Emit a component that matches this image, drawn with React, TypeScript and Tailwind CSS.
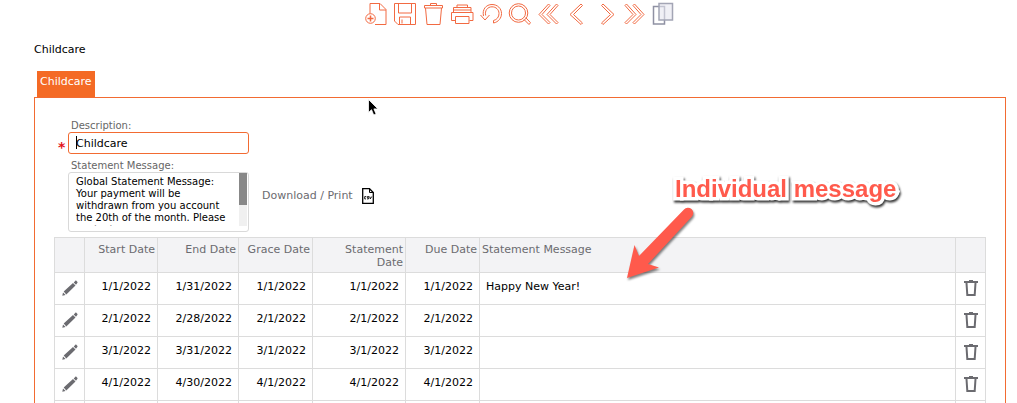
import type { ReactNode } from "react";

type BillingPeriod = {
  start: string;
  end: string;
  grace: string;
  statement: string;
  due: string;
  message?: string;
};

const periods: BillingPeriod[] = [
  {
    start: "1/1/2022",
    end: "1/31/2022",
    grace: "1/1/2022",
    statement: "1/1/2022",
    due: "1/1/2022",
    message: "Happy New Year!",
  },
  {
    start: "2/1/2022",
    end: "2/28/2022",
    grace: "2/1/2022",
    statement: "2/1/2022",
    due: "2/1/2022",
  },
  {
    start: "3/1/2022",
    end: "3/31/2022",
    grace: "3/1/2022",
    statement: "3/1/2022",
    due: "3/1/2022",
  },
  {
    start: "4/1/2022",
    end: "4/30/2022",
    grace: "4/1/2022",
    statement: "4/1/2022",
    due: "4/1/2022",
  },
];

const message =
  "Global Statement Message:\nYour payment will be\nwithdrawn from you account\nthe 20th of the month. Please\ncontact us";

// Toolbar glyphs, all drawn on a 24x24 grid
const tools: { name: string; icon: ReactNode }[] = [
  {
    name: "New",
    icon: (
      <>
        <path d="M6 11.500V1.500h10l6 6V22.500H11" />
        <path d="M15.500 2v6H22" />
        <circle cx="6.500" cy="16.500" r="4.800" />
        <path d="M6.500 13.500v6M3.500 16.500h6" strokeWidth="1.500" />
      </>
    ),
  },
  {
    name: "Save",
    icon: (
      <>
        <path d="M1.500 1.500h21v21H5l-3.500-3.500z" />
        <path d="M5.500 1.500v9.500h13V1.500M6.500 22.500V15h11v7.500M9 17.500v4" />
      </>
    ),
  },
  {
    name: "Delete",
    icon: (
      <>
        <path d="M4.500 6l1.500 16.500h13L20.500 6" />
        <path d="M3.500 3.500h18V6h-18zM9.500 3.500v-2h6v2" />
      </>
    ),
  },
  {
    name: "Print",
    icon: (
      <>
        <path d="M7 5V3h10.500v2M3.500 10.500V5.500h17.500v5" />
        <path d="M5 18.500H1.500V10.500H23v8h-3.500" />
        <path d="M5.500 14.500h13.500v7H5.500zM3.500 8h17.500" />
      </>
    ),
  },
  {
    name: "Undo",
    icon: (
      <>
        <path d="M4.500 14C3 7.500 7 2.500 13 2.500c5.500 0 9.500 4 9.500 9 0 4.500-3 8.500-8 9.500v-2.500c3.500-.8 5.500-3.500 5.500-7 0-3.800-3-6.700-7-6.700-4.500 0-7.500 4-6.300 8.700" />
        <path d="M1.500 13l4.500 5 4.500-5" />
      </>
    ),
  },
  {
    name: "Search",
    icon: (
      <>
        <circle cx="11.500" cy="11" r="9.300" />
        <circle cx="11.500" cy="11" r="7" />
        <path d="M17 17.500l5 5 1.500-1.800-4.700-5" />
      </>
    ),
  },
  {
    name: "First",
    icon: (
      <path d="M12.500 2L3 12.500l9.500 9.500 1.500-1.500-8-8 8-9zM20.500 2L11 12.500l9.500 9.500 1.500-1.500-8-8 8-9z" />
    ),
  },
  {
    name: "Previous",
    icon: <path d="M16 2L5 12.500 16 22.500l1.500-1.500-9-8.500 9-9z" />,
  },
  {
    name: "Next",
    icon: <path d="M9 2l11 10.500L9 22.500 7.500 21l9-8.500-9-9z" />,
  },
  {
    name: "Last",
    icon: (
      <path d="M12.500 2l9.500 10.500-9.500 9.500-1.500-1.500 8-8-8-9zM4.500 2L14 12.500 4.500 22 3 20.500l8-8-8-9z" />
    ),
  },
  {
    name: "Copy",
    icon: (
      <g stroke="#a3a5b5" strokeWidth="1.500">
        <path d="M2.500 4.500h11v17.500h-11z" stroke="#8f91a3" />
        <path d="M8 1.500h13.500v16.500H8z" fill="#e6e6f0" fillOpacity=".6" />
      </g>
    ),
  },
];

function Toolbar() {
  return (
    <div className="flex justify-center pt-[2px] pl-[22px]">
      <div className="flex w-[311px] justify-between">
        {tools.map((tool) => (
          <button key={tool.name} type="button" aria-label={tool.name}>
            <svg
              viewBox="0 0 24 24"
              className="size-6"
              fill="none"
              stroke="#f26a42"
              strokeWidth="1"
            >
              {tool.icon}
            </svg>
          </button>
        ))}
      </div>
    </div>
  );
}

function PencilIcon() {
  return (
    <svg viewBox="0 0 16 16" className="size-4" fill="#6b6b70">
      <path d="M.300 15.800l.7-3.300 2.600 2.600zM1.700 11.600L11 3l2.500 2.500-9.200 9zM11.700 2.400l1.500-1.500c.4-.4.9-.4 1.300 0l.8.8c.4.4.4.9 0 1.300l-1.300 1.700z" />
    </svg>
  );
}

function TrashIcon() {
  return (
    <svg viewBox="0 0 14 16" className="h-4 w-[14px]" fill="none" stroke="#6b6b70" strokeWidth="2">
      <path d="M0 2h14M5 1h4" />
      <path d="M2.500 3l.8 12h7.400l.8-12" />
    </svg>
  );
}

function CsvIcon() {
  return (
    <svg viewBox="0 0 12 16" className="h-4 w-3" fill="none" stroke="#000">
      <path d="M1.500.700h6l3.800 3.800v10.800H.700V.700z" strokeWidth="1.300" />
      <path d="M7.500.700v3.800h3.800" />
      <path
        d="M4.300 8.600H2.700v2.300h1.300M6.900 8.500H5.500l-.2 1.200h1.400l-.2 1.200H5M7.700 8.500l.6 2.400 1.500-2.400"
        strokeWidth=".9"
      />
    </svg>
  );
}

function DetailsForm() {
  return (
    <div className="flex items-end">
      <div className="flex w-[195px] flex-col">
        <label
          htmlFor="description"
          className="pl-[17px] text-[10px] leading-3 text-[#666]"
        >
          Description:
        </label>
        <div className="flex items-center">
          <span className="w-[14px] pt-2 pl-1 text-sm leading-3 font-bold text-[#e3131b]">
            *
          </span>
          <div className="relative flex-1">
            <input
              id="description"
              type="text"
              defaultValue="Childcare"
              className="block h-[22px] w-full rounded-[3px] border border-[#f26b32] px-[7px] text-[11px] outline-none"
            />
            <span className="absolute top-1 left-2 h-[13px] w-px bg-black" />
          </div>
        </div>
        <label
          htmlFor="message"
          className="pt-[6px] pl-[17px] text-[10px] leading-3 text-[#666]"
        >
          Statement Message:
        </label>
        <div className="relative ml-[14px] rounded-[3px] border border-[#d9d9d9] pt-[3px] pb-[5px]">
          <textarea
            id="message"
            defaultValue={message}
            className="block h-[50px] w-full resize-none overflow-hidden pr-3 pl-[7px] text-[10px] leading-3 outline-none"
          />
          <div className="absolute top-0 right-[1px] h-[53px] w-2 bg-[#f0f0f0]">
            <div className="h-8 bg-[#888]" />
          </div>
        </div>
      </div>
      <a
        href="#csv"
        className="mb-7 ml-[13px] flex items-center gap-[9px] text-[11px] leading-4 text-[#6b6b70]"
      >
        Download / Print
        <CsvIcon />
      </a>
    </div>
  );
}

function PeriodTable() {
  const head = "border border-[#dcdcdc] px-[2px] pt-[5px] text-right align-top font-normal";
  const cell = "border border-[#dcdcdc] px-[6px] pb-[5px] text-right";
  return (
    <table className="mt-[5px] w-full table-fixed border-collapse text-[11px] leading-[13px]">
      <colgroup>
        <col className="w-[30px]" />
        <col className="w-[73px]" />
        <col className="w-[81px]" />
        <col className="w-[74px]" />
        <col className="w-[93px]" />
        <col className="w-[74px]" />
        <col />
        <col className="w-[30px]" />
      </colgroup>
      <thead className="bg-[#f3f3f5] text-[#6b6b70]">
        <tr className="h-[35px]">
          <th className={head} />
          <th className={head}>Start Date</th>
          <th className={head}>End Date</th>
          <th className={head}>Grace Date</th>
          <th className={head}>
            Statement
            <br />
            Date
          </th>
          <th className={head}>Due Date</th>
          <th className="border border-[#dcdcdc] px-[2px] pt-[5px] text-left align-top font-normal">
            Statement Message
          </th>
          <th className={head} />
        </tr>
      </thead>
      <tbody>
        {periods.map((p) => (
          <tr key={p.start} className="h-8">
            <td className="border border-[#dcdcdc] p-0 pb-[2px]">
              <button type="button" aria-label="Edit" className="mx-auto block">
                <PencilIcon />
              </button>
            </td>
            <td className={cell}>{p.start}</td>
            <td className={cell}>{p.end}</td>
            <td className={cell}>{p.grace}</td>
            <td className={cell}>{p.statement}</td>
            <td className={cell}>{p.due}</td>
            <td className="border border-[#dcdcdc] px-[6px] pb-[5px] text-left">
              {p.message}
            </td>
            <td className="border border-[#dcdcdc] p-0 pb-[2px]">
              <button type="button" aria-label="Delete" className="mx-auto block">
                <TrashIcon />
              </button>
            </td>
          </tr>
        ))}
        <tr className="h-8">
          {Array.from({ length: 8 }, (_, i) => (
            <td key={i} className={cell} />
          ))}
        </tr>
      </tbody>
    </table>
  );
}

// Callout text and arrow pointing at the message column
function Callout() {
  return (
    <div className="pointer-events-none absolute top-[174px] left-[620px]">
      <div className="pl-[55px] font-['Liberation_Sans',Arial,sans-serif] text-2xl leading-[30px] font-bold whitespace-nowrap text-[#ff5a4c] drop-shadow-[1px_2px_1px_rgba(0,0,0,0.8)] [-webkit-text-stroke:7px_white] [paint-order:stroke_fill]">
        Individual message
      </div>
      <svg
        viewBox="0 0 84 84"
        className="size-[84px] drop-shadow-[1px_2px_1px_rgba(0,0,0,0.5)]"
        fill="#ff5a4c"
      >
        <path d="M7 74L14.500 41l4.500 11L64 5.500a5 5 0 0 1 8 7L28 60l11 3.500z" />
      </svg>
    </div>
  );
}

function Pointer() {
  return (
    <svg
      viewBox="0 0 12 18"
      className="absolute top-[99px] left-[368px] h-[18px] w-3"
      stroke="#fff"
      strokeWidth=".8"
    >
      <path d="M.5.500v13l3-2.800 2.200 5.300 2.400-1-2.200-5.100h4z" />
    </svg>
  );
}

export default function App() {
  return (
    <div className="relative h-screen overflow-hidden bg-white font-['DejaVu_Sans',Verdana,sans-serif] text-black">
      <Toolbar />
      <main className="pr-[11px] pl-[34px]">
        <h1 className="pt-4 text-[11px] leading-4">Childcare</h1>
        <div className="pt-[13px] pl-[3px]">
          <button
            type="button"
            className="block h-[26px] bg-[#f46a25] px-[3px] pb-[3px] text-[11px] text-white"
          >
            Childcare
          </button>
        </div>
        <section className="border border-[#f26b32] px-[19px] pt-[22px] pb-5">
          <DetailsForm />
          <PeriodTable />
        </section>
      </main>
      <Callout />
      <Pointer />
    </div>
  );
}
